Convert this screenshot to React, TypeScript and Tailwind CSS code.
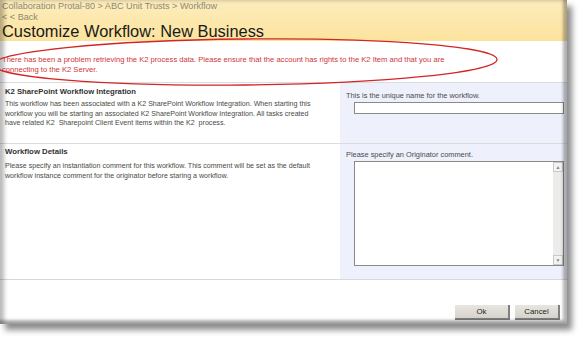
export default function App() {
  return (
    <div className="relative h-[338px] w-[582px] overflow-hidden bg-white font-['Liberation_Sans',Arial,sans-serif]">
      <div className="relative flex h-[324px] w-[567px] flex-col bg-white shadow-[5px_6px_6px_rgba(0,0,0,0.45)]">
        {/* Header */}
        <div className="h-[41px] bg-gradient-to-b from-[#fdedbd] to-[#fce39d] pl-[2px] pt-[1px]">
          <div className="text-[9.1px] leading-[11px] text-[#8c8a78]">
            Collaboration Protal-80 &gt; ABC Unit Trusts &gt; Workflow
          </div>
          <div className="text-[9.1px] leading-[10px] text-[#8c8a78]">&lt; &lt; Back</div>
          <div className="text-[16.4px] leading-[19px] text-[#1a1a1a]">Customize Workflow: New Business</div>
        </div>

        {/* Error message */}
        <div className="h-[41px] whitespace-nowrap px-[2px] pt-[14px] text-[7.6px] leading-[10px] text-[#d0343a]">
          There has been a problem retrieving the K2 process data. Please ensure that the account has rights to the K2 Item and that you are
          <br />
          connecting to the K2 Server.
        </div>

        {/* Name row */}
        <div className="flex h-[61px] border-t border-[#dcdcdc]">
          <div className="w-[340px] px-[5px] pt-[4px]">
            <div className="text-[7.7px] font-bold leading-[10px] text-[#333]">K2 SharePoint Workflow Integration</div>
            <p className="mt-[3px] whitespace-nowrap text-[7.1px] leading-[9.5px] text-[#4a4a44]">
              This workflow has been associated with a K2 SharePoint Workflow Integration. When starting this
              <br />
              workflow you will be starting an associated K2 SharePoint Workflow Integration. All tasks created
              <br />
              have related K2&nbsp; Sharepoint Client Event items within the K2&nbsp; process.
            </p>
          </div>
          <div className="flex-1 bg-[#eef1fb] pl-[6px] pr-[3px] pt-[8px]">
            <div className="text-[7.4px] leading-[9px] text-[#4a4a4a]">This is the unique name for the workflow.</div>
            <div className="ml-[8px] mt-[2px] h-[12px] border border-[#8a8a8a] bg-white" />
          </div>
        </div>

        {/* Details row */}
        <div className="flex h-[136px] border-t border-[#dcdcdc]">
          <div className="w-[340px] px-[5px] pt-[3px]">
            <div className="text-[7.8px] font-bold leading-[10px] text-[#333]">Workflow Details</div>
            <p className="mt-[5px] whitespace-nowrap text-[7.1px] leading-[9.5px] text-[#4a4a44]">
              Please specify an instantiation comment for this workflow. This comment will be set as the default
              <br />
              workflow instance comment for the originator before staring a workflow.
            </p>
          </div>
          <div className="flex-1 bg-[#eef1fb] pl-[6px] pr-[3px] pt-[6px]">
            <div className="text-[7.4px] leading-[9px] text-[#4a4a4a]">Please specify an Originator comment.</div>
            <div className="ml-[8px] mt-[2px] flex h-[105px] border border-[#8a8a8a] bg-white">
              <div className="flex-1" />
              <div className="flex w-[10px] flex-col justify-between bg-[#ececea]">
                <div className="flex h-[10px] items-center justify-center border border-[#c8c8c8] bg-[#f2f2f0] text-[5px] leading-none text-[#888]">▲</div>
                <div className="flex h-[10px] items-center justify-center border border-[#c8c8c8] bg-[#f2f2f0] text-[5px] leading-none text-[#888]">▼</div>
              </div>
            </div>
          </div>
        </div>

        {/* Footer */}
        <div className="flex flex-1 items-start justify-end gap-[5px] border-t border-[#d8d8d8] pr-[7px] pt-[25px]">
          <button className="h-[15px] w-[55px] border-b-2 border-r-2 border-[#808080] bg-gradient-to-b from-[#e8e6e0] to-[#d6d3cc] text-[7.8px] text-[#222]">Ok</button>
          <button className="h-[15px] w-[45px] border-b-2 border-r-2 border-[#808080] bg-gradient-to-b from-[#e8e6e0] to-[#d6d3cc] text-[7.8px] text-[#222]">Cancel</button>
        </div>

        {/* frame bevel */}
        <div className="pointer-events-none absolute inset-0 shadow-[inset_-4px_-4px_3px_rgba(0,0,0,0.3),inset_4px_0_4px_rgba(0,0,0,0.28)]" />
      </div>

      {/* red annotation ellipse */}
      <svg className="pointer-events-none absolute left-0 top-0" width="582" height="338" viewBox="0 0 582 338">
        <ellipse cx="245" cy="62" rx="252" ry="23" fill="none" stroke="#d42424" strokeWidth="1.3" transform="rotate(-0.6 245 62)" />
      </svg>
    </div>
  );
}
